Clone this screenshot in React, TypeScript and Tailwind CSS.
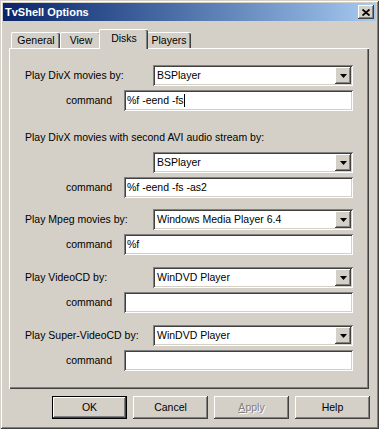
const raised =
  "shadow-[inset_-1px_-1px_0_#404040,inset_1px_1px_0_#ffffff,inset_-2px_-2px_0_#808080,inset_2px_2px_0_#d4d0c8]";
const sunken =
  "shadow-[inset_1px_1px_0_#808080,inset_-1px_-1px_0_#ffffff,inset_2px_2px_0_#404040,inset_-2px_-2px_0_#d4d0c8]";

function Combo({ value }: { value: string }) {
  return (
    <div className={`w-[200px] h-[21px] bg-white ${sunken} flex items-center p-[2px]`}>
      <span className="flex-1 pl-[2px] text-black">{value}</span>
      <div className={`w-[16px] h-[17px] bg-[#d4d0c8] ${raised} flex items-center justify-center`}>
        <svg width="7" height="4" viewBox="0 0 7 4">
          <path d="M0 0h7L3.5 4z" fill="#000" />
        </svg>
      </div>
    </div>
  );
}

function Edit({ value, focused }: { value: string; focused?: boolean }) {
  return (
    <div className={`w-[229px] h-[21px] bg-white ${sunken} flex items-center px-[3px]`}>
      <span className="text-black whitespace-pre">{value}</span>
      {focused && <span className="w-px h-[13px] bg-black" />}
    </div>
  );
}

function ComboRow({ label, value }: { label?: string; value: string }) {
  return (
    <div className="flex items-center h-[21px]">
      <span className="ml-[16px] w-[128px]">{label}</span>
      <Combo value={value} />
    </div>
  );
}

function CmdRow({ value, focused }: { value: string; focused?: boolean }) {
  return (
    <div className="flex items-center h-[21px] mt-[4px]">
      <span className="w-[103px] text-right">command</span>
      <span className="w-[12px]" />
      <Edit value={value} focused={focused} />
    </div>
  );
}

function Tab({ label, w, active }: { label: string; w: string; active?: boolean }) {
  return (
    <div
      className={`${w} ${
        active ? "h-[20px] -mx-[2px] -mb-px relative z-10 pb-[3px]" : "h-[16px]"
      } bg-[#d4d0c8] rounded-t-[2px] border-t border-l border-white shadow-[inset_-1px_0_0_#404040,inset_-2px_0_0_#808080] flex items-center justify-center`}
    >
      {label}
    </div>
  );
}

function Button({ label, isDefault, disabled }: { label: React.ReactNode; isDefault?: boolean; disabled?: boolean }) {
  return (
    <div
      className={`w-[75px] h-[23px] bg-[#d4d0c8] flex items-center justify-center ${
        isDefault
          ? "shadow-[inset_0_0_0_1px_#000000,inset_-2px_-2px_0_#404040,inset_2px_2px_0_#ffffff,inset_-3px_-3px_0_#808080]"
          : raised
      } ${disabled ? "text-[#808080] [text-shadow:1px_1px_0_#ffffff]" : "text-black"}`}
    >
      {label}
    </div>
  );
}

export default function App() {
  return (
    <div className="w-[379px] h-[429px] bg-[#d4d0c8] p-[3px] text-[10.5px] leading-[13px] text-black font-['Liberation_Sans',Arial,sans-serif] shadow-[inset_1px_1px_0_#d4d0c8,inset_-1px_-1px_0_#404040,inset_2px_2px_0_#ffffff,inset_-2px_-2px_0_#808080]">
      {/* title bar */}
      <div className="h-[18px] bg-gradient-to-r from-[#0a246a] to-[#a6caf0] flex items-center pl-[2px] pr-[2px]">
        <span className="flex-1 text-white font-bold text-[11px]">TvShell Options</span>
        <div className={`w-[16px] h-[14px] bg-[#d4d0c8] ${raised} flex items-center justify-center`}>
          <svg width="8" height="7" viewBox="0 0 8 7">
            <path d="M0.5 0.5L7.5 6.5M7.5 0.5L0.5 6.5" stroke="#000" strokeWidth="1.8" />
          </svg>
        </div>
      </div>

      <div className="pl-[6px] pt-[8px]">
        {/* tabs */}
        <div className="flex items-end h-[19px] pl-[2px]">
          <Tab label="General" w="w-[49px]" />
          <Tab label="View" w="w-[41px]" />
          <Tab label="Disks" w="w-[49px]" active />
          <Tab label="Players" w="w-[45px]" />
        </div>

        {/* tab page */}
        <div className="w-[360px] h-[341px] shadow-[inset_1px_1px_0_#ffffff,inset_-1px_-1px_0_#404040,inset_-2px_-2px_0_#808080] pt-[17px]">
          <ComboRow label="Play DivX movies by:" value="BSPlayer" />
          <CmdRow value="%f -eend -fs" focused />

          <div className="ml-[16px] mt-[20px] h-[13px]">Play DivX movies with second AVI audio stream by:</div>
          <div className="mt-[8px]">
            <ComboRow value="BSPlayer" />
          </div>
          <CmdRow value="%f -eend -fs -as2" />

          <div className="mt-[11px]">
            <ComboRow label="Play Mpeg movies by:" value="Windows Media Player 6.4" />
          </div>
          <CmdRow value="%f" />

          <div className="mt-[12px]">
            <ComboRow label="Play VideoCD by:" value="WinDVD Player" />
          </div>
          <CmdRow value="" />

          <div className="mt-[12px]">
            <ComboRow label="Play Super-VideoCD by:" value="WinDVD Player" />
          </div>
          <CmdRow value="" />
        </div>

        {/* buttons */}
        <div className="w-[361px] flex justify-end gap-[6px] mt-[7px]">
          <Button label="OK" isDefault />
          <Button label="Cancel" />
          <Button
            label={
              <span>
                <span className="underline">A</span>pply
              </span>
            }
            disabled
          />
          <Button label="Help" />
        </div>
      </div>
    </div>
  );
}
